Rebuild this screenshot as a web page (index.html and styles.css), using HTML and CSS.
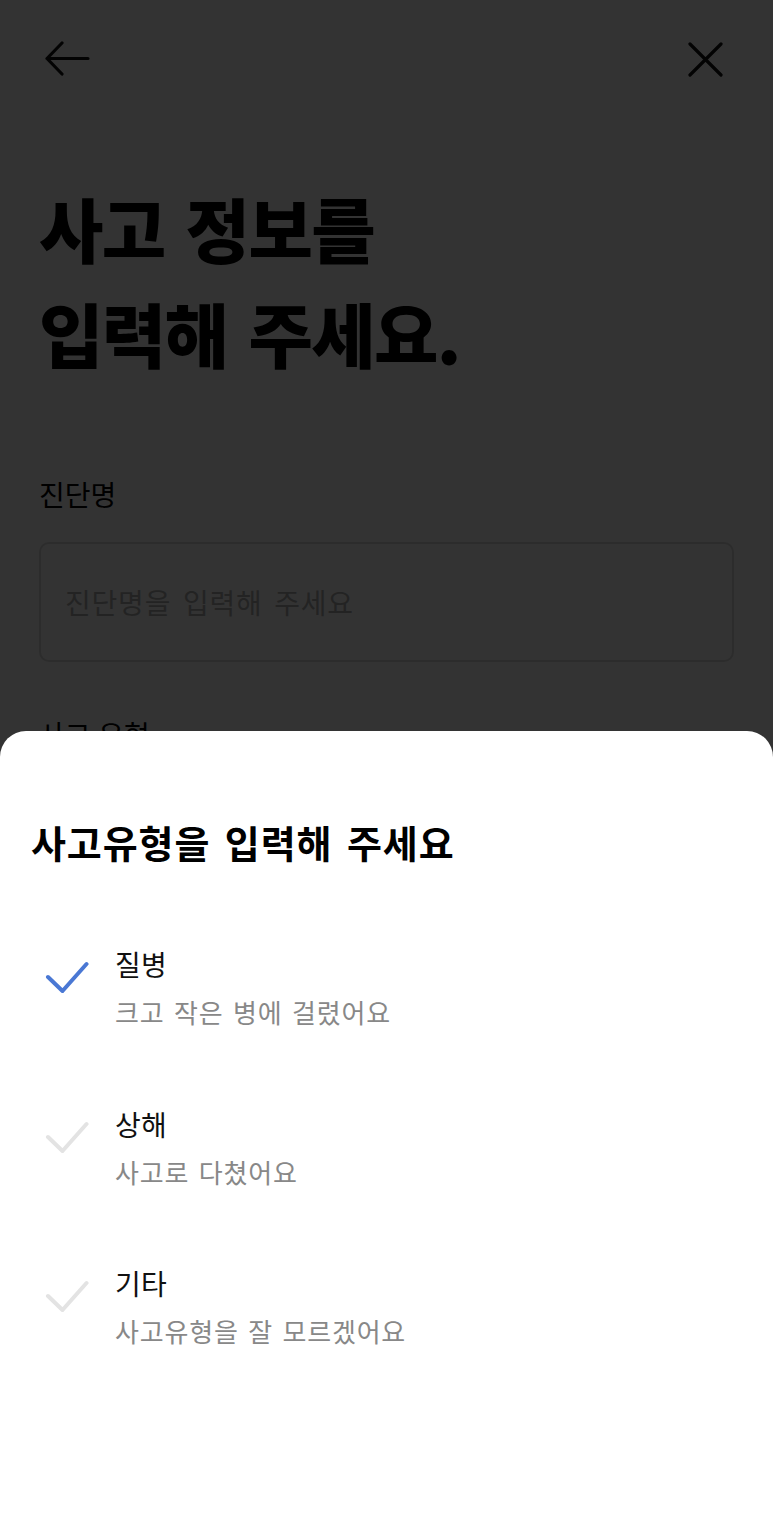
FILE: index.html
```html
<!DOCTYPE html>
<html lang="ko">
<head>
<meta charset="utf-8">
<title>사고 정보 입력</title>
<link rel="stylesheet" href="styles.css">
</head>
<body>
<div class="page">
  <header class="topbar">
    <button class="icon-btn" aria-label="뒤로">
      <svg width="46" height="36" viewBox="0 0 46 36" fill="none" stroke="#111" stroke-width="3.2" stroke-linecap="round" stroke-linejoin="round">
        <path d="M3 17.5 H44 M18 2 L3 17.5 L18 33"/>
      </svg>
    </button>
    <button class="icon-btn close-btn" aria-label="닫기">
      <svg width="36" height="36" viewBox="0 0 36 36" fill="none" stroke="#111" stroke-width="3.2" stroke-linecap="round">
        <path d="M3 2 L34 33 M34 2 L3 33"/>
      </svg>
    </button>
  </header>

  <h1 class="page-title">사고 정보를<br>입력해 주세요.</h1>

  <section class="field">
    <label class="field-label">진단명</label>
    <div class="input-box"><span class="placeholder">진단명을 입력해 주세요</span></div>
  </section>

  <section class="field field-second">
    <label class="field-label">사고 유형</label>
  </section>
</div>

<div class="dim"></div>

<div class="sheet">
  <h2 class="sheet-title">사고유형을 입력해 주세요</h2>
  <ul class="options">
    <li class="option">
      <svg class="check check-on" width="44" height="33" viewBox="0 0 44 33" fill="none" stroke-width="4" stroke-linecap="round" stroke-linejoin="round"><path d="M3 16 L17.5 30 L41.5 3"/></svg>
      <div class="option-text">
        <div class="option-title">질병</div>
        <div class="option-sub">크고 작은 병에 걸렸어요</div>
      </div>
    </li>
    <li class="option">
      <svg class="check" width="44" height="33" viewBox="0 0 44 33" fill="none" stroke-width="4" stroke-linecap="round" stroke-linejoin="round"><path d="M3 16 L17.5 30 L41.5 3"/></svg>
      <div class="option-text">
        <div class="option-title">상해</div>
        <div class="option-sub">사고로 다쳤어요</div>
      </div>
    </li>
    <li class="option">
      <svg class="check" width="44" height="33" viewBox="0 0 44 33" fill="none" stroke-width="4" stroke-linecap="round" stroke-linejoin="round"><path d="M3 16 L17.5 30 L41.5 3"/></svg>
      <div class="option-text">
        <div class="option-title">기타</div>
        <div class="option-sub">사고유형을 잘 모르겠어요</div>
      </div>
    </li>
  </ul>
</div>
</body>
</html>
```

FILE: styles.css
```css
* { box-sizing: border-box; }

html, body {
  margin: 0;
  padding: 0;
  background: #fff;
}

body {
  font-family: "Noto Sans CJK KR", "Noto Sans", sans-serif;
  color: #111;
  width: 773px;
  height: 1525px;
  overflow: hidden;
  position: relative;
}

.page {
  padding: 0 39px;
}

.topbar {
  height: 118px;
  display: flex;
  justify-content: space-between;
  align-items: flex-start;
  padding: 41px 0 0 5px;
}

.icon-btn {
  border: 0;
  background: none;
  padding: 0;
  display: block;
  cursor: pointer;
}

.close-btn {
  margin-right: 11px;
  margin-top: 1px;
}

.icon-btn svg { display: block; }

.page-title {
  margin: 57px 0 0;
  font-size: 70px;
  line-height: 105px;
  font-weight: 900;
  letter-spacing: -1.6px;
  word-spacing: 3px;
  color: #000;
}

.field {
  margin-top: 89px;
}

.field-second {
  margin-top: 52px;
}

.field-label {
  display: block;
  font-size: 28px;
  line-height: 40px;
  letter-spacing: 0;
  font-weight: 400;
  color: #000;
}

.input-box {
  margin-top: 28px;
  height: 120px;
  border: 2px solid #dcdcdc;
  border-radius: 10px;
  display: flex;
  align-items: center;
  padding: 0 24px;
}

.placeholder {
  font-size: 28px;
  line-height: 40px;
  letter-spacing: 0.8px;
  word-spacing: 3px;
  color: #b0b0b0;
}

.dim {
  position: absolute;
  inset: 0;
  background: rgba(0, 0, 0, 0.8);
}

.sheet {
  position: absolute;
  left: 0;
  right: 0;
  bottom: 0;
  height: 794px;
  background: #fff;
  border-radius: 26px 26px 0 0;
  padding: 86px 0 0 0;
}

.sheet-title {
  margin: 0 0 0 31px;
  font-size: 38px;
  line-height: 50px;
  font-weight: 700;
  letter-spacing: 0.9px;
  word-spacing: 3px;
  color: #000;
}

.options {
  list-style: none;
  margin: 79px 0 0;
  padding: 0;
  display: flex;
  flex-direction: column;
  gap: 76.5px;
}

.option {
  display: flex;
  align-items: flex-start;
  padding-left: 45px;
}

.check {
  flex: none;
  margin-top: 15px;
  stroke: #e3e3e3;
}

.check-on {
  stroke: #4a78d4;
}

.option-text {
  margin-left: 26px;
  display: flex;
  flex-direction: column;
  gap: 13px;
}

.option-title {
  font-size: 28px;
  line-height: 36px;
  letter-spacing: 0.3px;
  font-weight: 400;
  color: #111;
}

.option-sub {
  font-size: 26px;
  line-height: 34px;
  letter-spacing: 0.8px;
  word-spacing: 1.5px;
  color: #888;
}
```
